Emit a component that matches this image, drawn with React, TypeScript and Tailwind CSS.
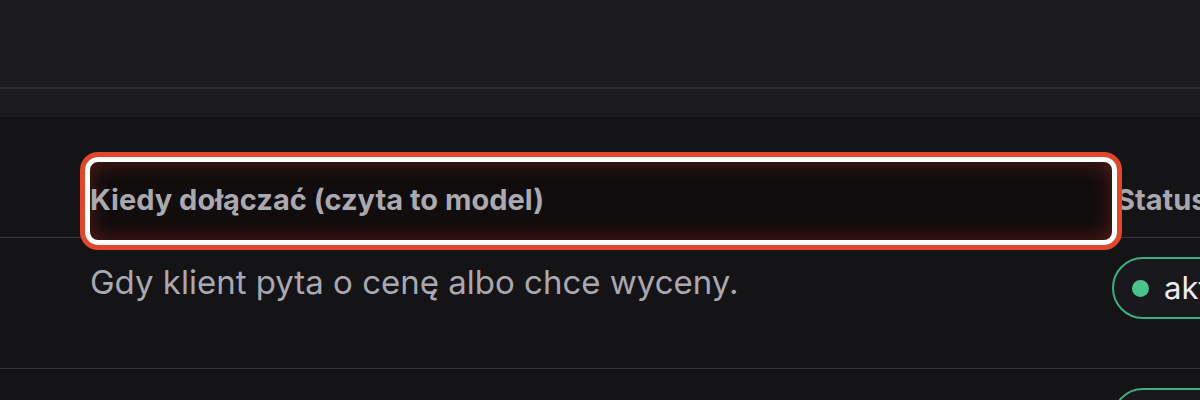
import React from 'react';

type Rule = { when: string; status: string };

const rules: Rule[] = [
  { when: 'Gdy klient pyta o cenę albo chce wyceny.', status: 'aktywny' },
  { when: 'Gdy klient prosi o próbkę lub zdjęcie.', status: 'aktywny' },
];

const StatusBadge: React.FC<{ label: string }> = ({ label }) => (
  <span className="inline-flex items-center gap-[15px] h-[62px] pl-[18px] pr-6 rounded-full border-2 border-[#3fae7e] bg-[#19181c] text-[31px] text-[#ececf0] whitespace-nowrap">
    <span className="w-[17px] h-[17px] rounded-full bg-[#4cc38a]" />
    {label}
  </span>
);

export default function App() {
  return (
    <div className="w-[1200px] h-[400px] overflow-hidden bg-[#141316]" style={{ fontFamily: 'Inter, "Noto Sans", sans-serif' }}>
      <div className="h-[89px] bg-[#1c1b20] border-b-2 border-[#2f2e34]" />
      <div className="h-[28px] bg-[#1c1b20]" />

      <div className="grid grid-cols-[1112px_1fr]">
        {/* header */}
        <div className="relative h-[121px] pl-[90px] pt-[65px] border-b border-[#37363c]">
          <div className="absolute left-[88px] -right-[1px] top-[44px] -bottom-[4px] rounded-[10px] bg-[#110c0d] shadow-[inset_0_0_22px_rgba(190,50,35,0.45)]" />
          <span className="relative block text-[29px] leading-[36px] font-bold text-[#aaa9b0] whitespace-nowrap">
            Kiedy dołączać (czyta to model)
          </span>
          <div className="absolute z-10 left-[80px] -right-[10px] top-[35px] -bottom-[13px] rounded-[18px] border-[5px] border-[#e2472b]">
            <div className="w-full h-full rounded-[13px] border-[5px] border-white" />
          </div>
        </div>
        <div className="h-[121px] pt-[65px] pl-[4px] border-b border-[#37363c]">
          <span className="block text-[29px] leading-[36px] font-bold text-[#a8a7ae] whitespace-nowrap">Status</span>
        </div>

        {rules.map((r, i) => (
          <React.Fragment key={i}>
            <div className="h-[131px] pl-[90px] pt-[22px] border-b border-[#37363c]">
              <p className="text-[33px] leading-[44px] text-[#a9a8b0] whitespace-nowrap">{r.when}</p>
            </div>
            <div className="h-[131px] pt-[19px] border-b border-[#37363c]">
              <StatusBadge label={r.status} />
            </div>
          </React.Fragment>
        ))}
      </div>
    </div>
  );
}
